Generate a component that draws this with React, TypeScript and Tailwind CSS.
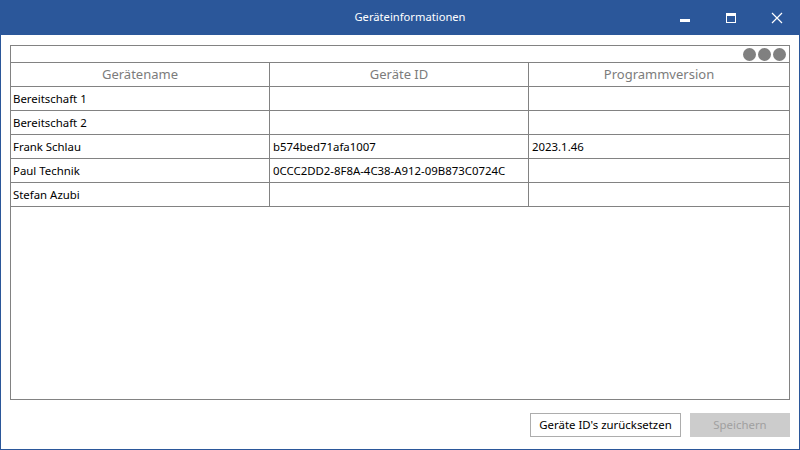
import React from 'react';

interface Device {
  name: string;
  id: string;
  version: string;
}

const devices: Device[] = [
  { name: 'Bereitschaft 1', id: '', version: '' },
  { name: 'Bereitschaft 2', id: '', version: '' },
  { name: 'Frank Schlau', id: 'b574bed71afa1007', version: '2023.1.46' },
  { name: 'Paul Technik', id: '0CCC2DD2-8F8A-4C38-A912-09B873C0724C', version: '' },
  { name: 'Stefan Azubi', id: '', version: '' },
];

const cols = 'grid grid-cols-[259px_259px_1fr]';

export default function App() {
  return (
    <div
      className="w-[800px] h-[450px] flex flex-col bg-white border border-t-0 border-[#2b579a] text-[11.4px] text-black overflow-hidden"
      style={{ fontFamily: '"Segoe UI", "Noto Sans", sans-serif' }}
    >
      {/* title bar */}
      <div className="h-[35px] shrink-0 -mx-px bg-[#2b579a] text-white flex items-center relative">
        <div className="flex-1 text-center text-[11.2px] pl-[20px]">Geräteinformationen</div>
        <div className="absolute right-0 top-0 h-full flex items-center">
          <div className="w-[46px] h-full flex items-center justify-center">
            <div className="w-[10px] h-[3px] bg-white mt-[6px]" />
          </div>
          <div className="w-[46px] h-full flex items-center justify-center">
            <div className="w-[10px] h-[10px] border border-white border-t-[3px]" />
          </div>
          <div className="w-[46px] h-full flex items-center justify-center">
            <svg width="12" height="12" viewBox="0 0 12 12" stroke="white" strokeWidth="1.2">
              <path d="M1 1L11 11M11 1L1 11" />
            </svg>
          </div>
        </div>
      </div>

      {/* body */}
      <div className="flex-1 flex flex-col pt-[10px] px-[9px] pb-[12px]">
        <div className="h-[355px] border border-[#828282] flex flex-col">
          <div className="h-[17px] border-b border-[#828282] flex items-center justify-end gap-[2px] pr-[3px]">
            <span className="w-[13px] h-[13px] rounded-full bg-[#808080]" />
            <span className="w-[13px] h-[13px] rounded-full bg-[#808080]" />
            <span className="w-[13px] h-[13px] rounded-full bg-[#808080]" />
          </div>
          <div className={`${cols} h-[24px] border-b border-[#828282] text-[13px] text-[#7c7c7c]`}>
            <div className="flex items-center justify-center border-r border-[#828282]">Gerätename</div>
            <div className="flex items-center justify-center border-r border-[#828282]">Geräte ID</div>
            <div className="flex items-center justify-center">Programmversion</div>
          </div>
          {devices.map((d) => (
            <div key={d.name} className={`${cols} h-[24px] border-b border-[#828282]`}>
              <div className="flex items-center pl-[2px] border-r border-[#828282]">{d.name}</div>
              <div className="flex items-center pl-[3px] border-r border-[#828282]">{d.id}</div>
              <div className="flex items-center pl-[3px]">{d.version}</div>
            </div>
          ))}
        </div>

        <div className="mt-auto flex justify-end gap-[9px]">
          <button className="h-[24px] w-[151px] border border-[#adadad] bg-white text-[11.4px]">
            Geräte ID's zurücksetzen
          </button>
          <button className="h-[24px] w-[100px] bg-[#cccccc] text-[#a0a0a0] text-[11.4px]">
            Speichern
          </button>
        </div>
      </div>
    </div>
  );
}
